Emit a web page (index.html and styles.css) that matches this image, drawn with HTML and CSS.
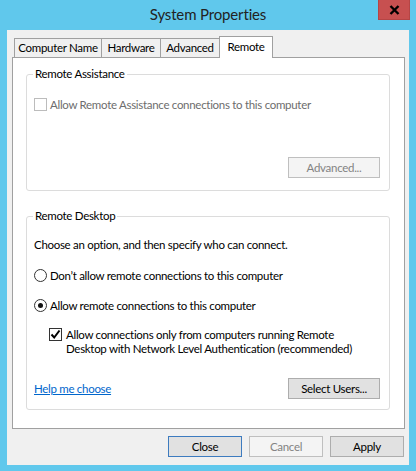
FILE: index.html
```html
<!DOCTYPE html>
<html>
<head>
<meta charset="utf-8">
<title>System Properties</title>
<link rel="stylesheet" href="styles.css">
</head>
<body>
<div class="window">
  <div class="titlebar">
    <span class="title">System Properties</span>
    <div class="close-btn">
      <svg width="11" height="10" viewBox="0 0 11 10"><path d="M1.5 1 L9.5 9 M9.5 1 L1.5 9" stroke="#000" stroke-width="2.4" fill="none"/></svg>
    </div>
  </div>
  <div class="client">
    <div class="tabs">
      <div class="tab t-cn">Computer Name</div>
      <div class="tab t-hw">Hardware</div>
      <div class="tab t-adv">Advanced</div>
      <div class="tab t-rem active">Remote</div>
    </div>
    <div class="panel">
      <fieldset class="group ra">
        <legend>Remote Assistance</legend>
        <div class="row check-row disabled">
          <span class="box"></span>
          <span>Allow Remote Assistance connections to this computer</span>
        </div>
        <div class="btn-row ra-btns">
          <button class="btn wide disabled">Advanced...</button>
        </div>
      </fieldset>
      <fieldset class="group rd">
        <legend>Remote Desktop</legend>
        <div class="row intro">Choose an option, and then specify who can connect.</div>
        <div class="row radio-row r1">
          <span class="radio"></span>
          <span>Don’t allow remote connections to this computer</span>
        </div>
        <div class="row radio-row r2">
          <span class="radio on"><span class="dot"></span></span>
          <span>Allow remote connections to this computer</span>
        </div>
        <div class="row nla-row">
          <span class="box checked">
            <svg width="11" height="11" viewBox="0 0 11 11"><path d="M1.5 5.5 L4.2 8.5 L9.5 1.5" stroke="#000" stroke-width="2" fill="none"/></svg>
          </span>
          <span class="nla-text">Allow connections only from computers running Remote<br>Desktop with Network Level Authentication (recommended)</span>
        </div>
        <div class="btn-row rd-btns">
          <a class="link" href="#">Help me choose</a>
          <button class="btn wide">Select Users...</button>
        </div>
      </fieldset>
    </div>
    <div class="footer">
      <button class="btn default">Close</button>
      <button class="btn disabled">Cancel</button>
      <button class="btn">Apply</button>
    </div>
  </div>
</div>
</body>
</html>
```
FILE: styles.css
```css
* { box-sizing: border-box; }
html, body { margin: 0; padding: 0; }
body {
  width: 416px;
  height: 471px;
  overflow: hidden;
  background: #60c8ec;
  font-family: Lato, "Noto Sans", sans-serif;
  font-size: 11.5px;
  letter-spacing: -0.3px;
  color: #000;
  white-space: nowrap;
}
.window {
  width: 416px;
  height: 471px;
  display: flex;
  flex-direction: column;
}
.titlebar {
  height: 30px;
  position: relative;
  display: flex;
  justify-content: center;
}
.title {
  font-size: 15px;
  letter-spacing: -0.15px;
  line-height: 28px;
  color: #222;
}
.close-btn {
  position: absolute;
  top: 0;
  right: 6px;
  width: 32px;
  height: 20px;
  background: #c75050;
  border: 1px solid #b54545;
  border-top: none;
  display: flex;
  align-items: center;
  justify-content: center;
}
.client {
  margin: 0 7px;
  height: 435px;
  background: #f0f0f0;
  padding: 6px 4px 8px 5px;
  display: flex;
  flex-direction: column;
}
.tabs {
  display: flex;
  align-items: flex-end;
  height: 21px;
  padding-left: 2px;
  position: relative;
  z-index: 1;
}
.tab {
  height: 19px;
  border: 1px solid #a0a0a0;
  border-bottom: none;
  background: #f0f0f0;
  margin-left: -1px;
  text-align: center;
  line-height: 18px;
  flex: none;
}
.t-cn { width: 88px; margin-left: 0; }
.t-hw { width: 60px; }
.t-adv { width: 60px; }
.t-rem { width: 54px; }
.tab.active {
  height: 22px;
  margin-bottom: -1px;
  background: #fff;
  line-height: 19px;
}
.panel {
  height: 372px;
  background: #fff;
  border: 1px solid #a0a0a0;
  padding: 9px 14px 0 13px;
}
.group {
  margin: 0;
  min-width: 0;
  border: 1px solid #dcdcdc;
  border-radius: 3px;
  padding: 0 9px 0 7px;
}
.group legend {
  padding: 0 2px;
  margin-left: -1px;
  line-height: 14px;
}
.ra { padding-bottom: 12px; }
.rd { margin-top: 18px; padding-bottom: 10px; }
.row {
  display: flex;
  align-items: flex-start;
  line-height: 15px;
}
.check-row { margin-top: 16px; }
.disabled { color: #6d6d6d; }
.box {
  width: 13px;
  height: 13px;
  margin-top: 1px;
  margin-right: 3px;
  border: 1px solid #333;
  background: #fff;
  flex: none;
  display: flex;
  align-items: center;
  justify-content: center;
}
.disabled .box { border-color: #bcbcbc; }
.btn-row {
  display: flex;
  align-items: center;
  justify-content: flex-end;
}
.ra-btns { margin-top: 45px; }
.intro { margin-top: 14px; }
.r1 { margin-top: 16px; }
.r2 { margin-top: 15px; }
.radio {
  width: 13px;
  height: 13px;
  margin-top: 1px;
  margin-right: 3px;
  border: 1px solid #333;
  border-radius: 50%;
  background: #fff;
  flex: none;
  display: flex;
  align-items: center;
  justify-content: center;
}
.radio .dot {
  width: 5px;
  height: 5px;
  border-radius: 50%;
  background: #111;
}
.nla-row {
  margin-top: 15px;
  margin-left: 15px;
  line-height: 14px;
}
.nla-row .box { margin-top: 0; margin-right: 4px; }
.rd-btns {
  margin-top: 22px;
  justify-content: space-between;
}
.link {
  color: #0066cc;
  text-decoration: underline;
}
.btn {
  height: 21px;
  width: 74px;
  padding: 0;
  border: 1px solid #adadad;
  background: #e1e1e1;
  font-family: inherit;
  font-size: 11.5px;
  letter-spacing: -0.3px;
  color: #000;
  line-height: 19px;
}
.btn.wide { width: 92px; }
.btn.default { border-color: #3d7bbf; }
.btn.disabled {
  background: #f4f4f4;
  border-color: #bfbfbf;
  color: #838383;
}
.footer {
  display: flex;
  justify-content: flex-end;
  gap: 7px;
  margin-top: 7px;
  padding-right: 1px;
}
```
